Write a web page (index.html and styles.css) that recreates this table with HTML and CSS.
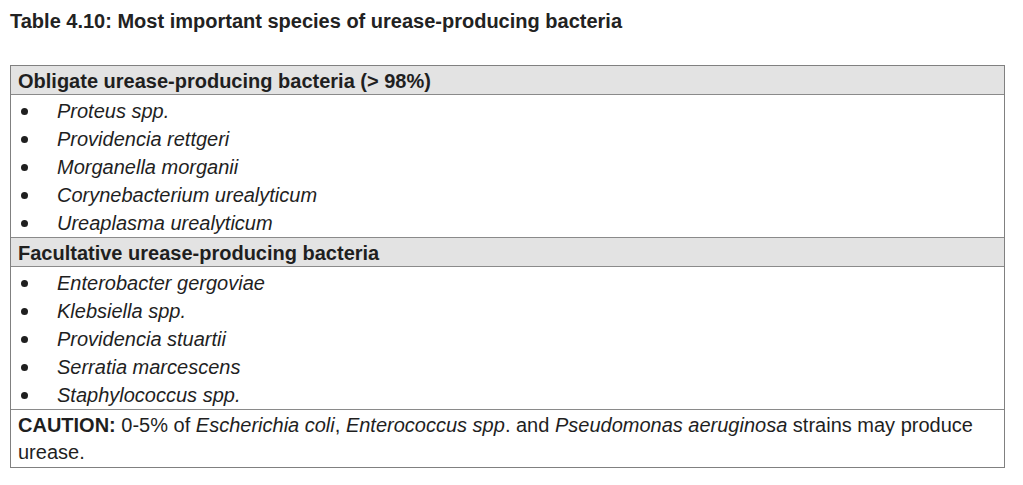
FILE: index.html
```html
<!DOCTYPE html>
<html>
<head>
<meta charset="utf-8">
<link rel="stylesheet" href="styles.css">
</head>
<body>
<div class="page">
  <h1 class="title">Table 4.10: Most important species of urease-producing bacteria</h1>
  <div class="tbl">
    <div class="head">Obligate urease-producing bacteria (&gt; 98%)</div>
    <ul class="list">
      <li><span class="dot"></span><i>Proteus spp.</i></li>
      <li><span class="dot"></span><i>Providencia rettgeri</i></li>
      <li><span class="dot"></span><i>Morganella morganii</i></li>
      <li><span class="dot"></span><i>Corynebacterium urealyticum</i></li>
      <li><span class="dot"></span><i>Ureaplasma urealyticum</i></li>
    </ul>
    <div class="head">Facultative urease-producing bacteria</div>
    <ul class="list">
      <li><span class="dot"></span><i>Enterobacter gergoviae</i></li>
      <li><span class="dot"></span><i>Klebsiella spp.</i></li>
      <li><span class="dot"></span><i>Providencia stuartii</i></li>
      <li><span class="dot"></span><i>Serratia marcescens</i></li>
      <li><span class="dot"></span><i>Staphylococcus spp.</i></li>
    </ul>
    <p class="note"><b>CAUTION:</b> 0-5% of <i>Escherichia coli</i>, <i>Enterococcus spp</i>. and <i>Pseudomonas aeruginosa</i> strains may produce urease.</p>
  </div>
</div>
</body>
</html>
```
FILE: styles.css
```css
html, body { margin: 0; padding: 0; background: #fff; }
body { font-family: "Liberation Sans", Arial, sans-serif; color: #1f1f1f; }
.page { padding: 9px 0 0 10px; width: 995px; }
.title { margin: 0; font-size: 20px; font-weight: bold; line-height: 24px; color: #222; }
.tbl { margin-top: 32px; border: 1px solid #808080; }
.head { background: #e3e3e3; font-weight: bold; font-size: 20px; line-height: 28px; padding: 1px 0 0 7px; box-sizing: border-box; border-bottom: 1px solid #8a8a8a; height: 29px; }
.list { list-style: none; margin: 0; padding: 2px 0 0; border-bottom: 1px solid #8a8a8a; }
.list li { font-size: 20px; line-height: 28px; display: flex; align-items: center; }
.dot { width: 7px; height: 7px; border-radius: 50%; background: #1f1f1f; margin: 0 29px 0 10px; flex: none; }
.note { margin: 0; font-size: 20px; line-height: 27px; padding: 2px 7px 1px 7px; }
.note b { font-weight: bold; }
```
